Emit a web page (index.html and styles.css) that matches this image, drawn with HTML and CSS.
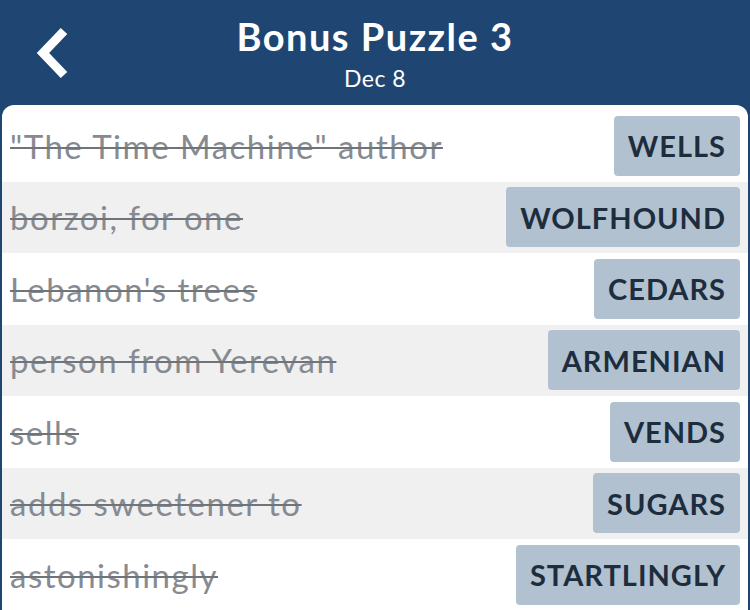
FILE: index.html
```html
<!DOCTYPE html>
<html lang="en">
<head>
  <meta charset="UTF-8" />
  <title>Bonus Puzzle 3</title>
  <link rel="stylesheet" href="styles.css">
</head>
<body>
  <header class="topbar">
    <a class="back" href="#">
      <svg width="40" height="56" viewBox="0 0 40 56">
        <polyline points="31,6 10,28 31,50" fill="none" stroke="#fff" stroke-width="9" stroke-linejoin="miter" />
      </svg>
    </a>
    <div class="title">Bonus Puzzle 3</div>
    <div class="subtitle">Dec 8</div>
  </header>

  <main class="card">
    <div class="row">
      <span class="clue">"The Time Machine" author</span>
      <button class="answer">WELLS</button>
    </div>
    <div class="row">
      <span class="clue">borzoi, for one</span>
      <button class="answer">WOLFHOUND</button>
    </div>
    <div class="row">
      <span class="clue">Lebanon's trees</span>
      <button class="answer">CEDARS</button>
    </div>
    <div class="row">
      <span class="clue">person from Yerevan</span>
      <button class="answer">ARMENIAN</button>
    </div>
    <div class="row">
      <span class="clue">sells</span>
      <button class="answer">VENDS</button>
    </div>
    <div class="row">
      <span class="clue">adds sweetener to</span>
      <button class="answer">SUGARS</button>
    </div>
    <div class="row">
      <span class="clue">astonishingly</span>
      <button class="answer">STARTLINGLY</button>
    </div>
  </main>
</body>
</html>
```

FILE: styles.css
```css
html, body {
  margin: 0;
  height: 100%;
}
body {
  font-family: Lato, "Noto Sans", sans-serif;
  background-color: #1f4673;
  overflow: hidden;
}
.topbar {
  position: relative;
  height: 105px;
  color: white;
  text-align: center;
}
.back {
  position: absolute;
  left: 33px;
  top: 25px;
}
.back svg {
  display: block;
}
.title {
  padding-top: 13px;
  font-size: 38px;
  font-weight: bold;
  line-height: 46px;
  letter-spacing: 1.5px;
}
.subtitle {
  padding-top: 5px;
  font-size: 23px;
  line-height: 28px;
  letter-spacing: 0.5px;
}
.card {
  margin: 0 2px;
  padding-top: 5px;
  background-color: white;
  border-radius: 12px 12px 0 0;
  height: 510px;
}
.row {
  display: flex;
  align-items: center;
  justify-content: space-between;
  height: 71.5px;
  padding: 0 8px;
}
.row:nth-child(even) {
  background-color: #f0f0f0;
}
.clue {
  font-size: 33px;
  letter-spacing: 1.5px;
  color: #878b91;
  text-decoration: line-through;
  text-decoration-color: #6f747a;
  text-decoration-thickness: 2px;
}
.answer {
  height: 60px;
  padding: 0 14px;
  border: none;
  border-radius: 4px;
  background-color: #b1c1d0;
  color: #1d2d3e;
  font-family: Lato, "Noto Sans", sans-serif;
  font-size: 29px;
  font-weight: bold;
  letter-spacing: 1px;
}
```
